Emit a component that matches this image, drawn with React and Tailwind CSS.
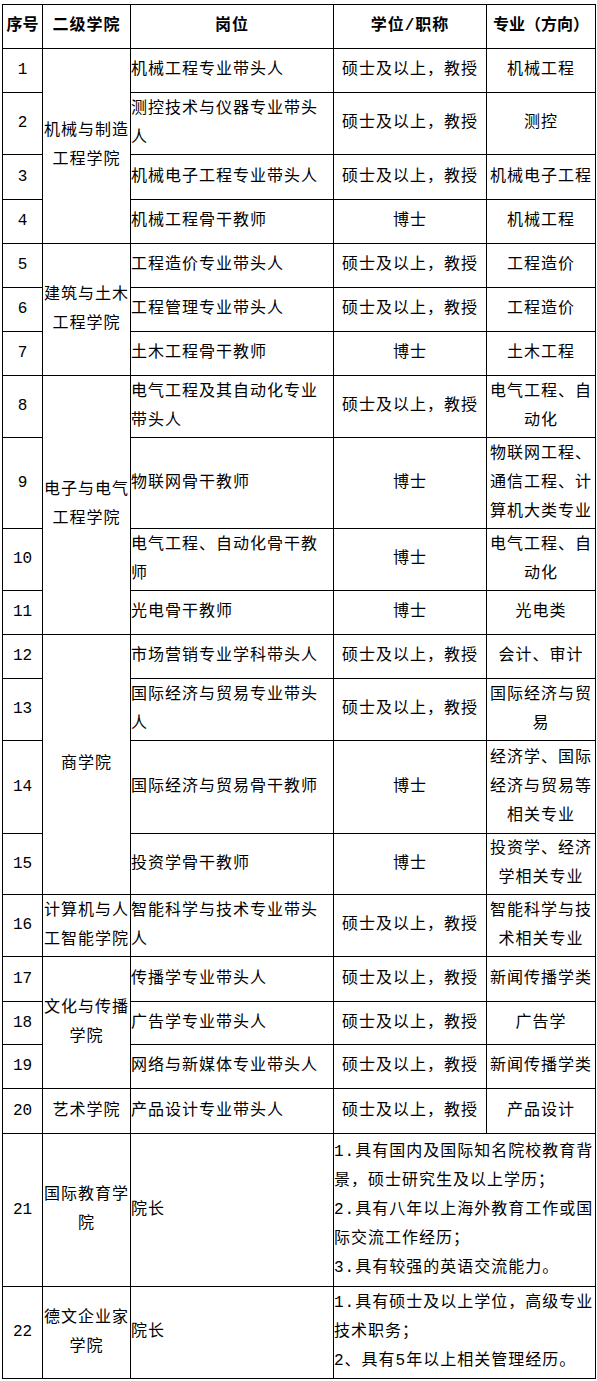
import React from 'react';

const rows = [
  { no: 1, college: '机械与制造工程学院', span: 4, post: '机械工程专业带头人', degree: '硕士及以上，教授', major: '机械工程', h: 'h-[44px]' },
  { no: 2, post: '测控技术与仪器专业带头人', degree: '硕士及以上，教授', major: '测控', h: 'h-[62px]' },
  { no: 3, post: '机械电子工程专业带头人', degree: '硕士及以上，教授', major: '机械电子工程', h: 'h-[45px]' },
  { no: 4, post: '机械工程骨干教师', degree: '博士', major: '机械工程', h: 'h-[44px]' },
  { no: 5, college: '建筑与土木工程学院', span: 3, post: '工程造价专业带头人', degree: '硕士及以上，教授', major: '工程造价', h: 'h-[44px]' },
  { no: 6, post: '工程管理专业带头人', degree: '硕士及以上，教授', major: '工程造价', h: 'h-[44px]' },
  { no: 7, post: '土木工程骨干教师', degree: '博士', major: '土木工程', h: 'h-[44px]' },
  { no: 8, college: '电子与电气工程学院', span: 4, post: '电气工程及其自动化专业带头人', degree: '硕士及以上，教授', major: '电气工程、自动化', h: 'h-[62px]' },
  { no: 9, post: '物联网骨干教师', degree: '博士', major: '物联网工程、通信工程、计算机大类专业', h: 'h-[91px]' },
  { no: 10, post: '电气工程、自动化骨干教师', degree: '博士', major: '电气工程、自动化', h: 'h-[62px]' },
  { no: 11, post: '光电骨干教师', degree: '博士', major: '光电类', h: 'h-[44px]' },
  { no: 12, college: '商学院', span: 4, post: '市场营销专业学科带头人', degree: '硕士及以上，教授', major: '会计、审计', h: 'h-[44px]' },
  { no: 13, post: '国际经济与贸易专业带头人', degree: '硕士及以上，教授', major: '国际经济与贸易', h: 'h-[62px]' },
  { no: 14, post: '国际经济与贸易骨干教师', degree: '博士', major: '经济学、国际经济与贸易等相关专业', h: 'h-[93px]' },
  { no: 15, post: '投资学骨干教师', degree: '博士', major: '投资学、经济学相关专业', h: 'h-[61px]' },
  { no: 16, college: '计算机与人工智能学院', span: 1, post: '智能科学与技术专业带头人', degree: '硕士及以上，教授', major: '智能科学与技术相关专业', h: 'h-[62px]' },
  { no: 17, college: '文化与传播学院', span: 3, post: '传播学专业带头人', degree: '硕士及以上，教授', major: '新闻传播学类', h: 'h-[45px]' },
  { no: 18, post: '广告学专业带头人', degree: '硕士及以上，教授', major: '广告学', h: 'h-[43px]' },
  { no: 19, post: '网络与新媒体专业带头人', degree: '硕士及以上，教授', major: '新闻传播学类', h: 'h-[44px]' },
  { no: 20, college: '艺术学院', span: 1, post: '产品设计专业带头人', degree: '硕士及以上，教授', major: '产品设计', h: 'h-[45px]' },
  {
    no: 21, college: '国际教育学院', span: 1, post: '院长', h: 'h-[153px]',
    notes: ['1.具有国内及国际知名院校教育背景，硕士研究生及以上学历；', '2.具有八年以上海外教育工作或国际交流工作经历；', '3.具有较强的英语交流能力。'],
  },
  {
    no: 22, college: '德文企业家学院', span: 1, post: '院长', h: 'h-[92px]',
    notes: ['1.具有硕士及以上学位，高级专业技术职务；', '2、具有5年以上相关管理经历。'],
  },
];

const cell = 'border border-black align-middle p-0';

export default function App() {
  return (
    <div
      className="bg-white pt-[4px] pl-[2px] text-black text-[16px] leading-[29px] tracking-[1px]"
      style={{ fontFamily: '"Liberation Mono", "Noto Sans CJK SC", monospace' }}
    >
      <table className="border-collapse table-fixed w-[593px]">
        <colgroup>
          <col className="w-[40px]" />
          <col className="w-[88px]" />
          <col className="w-[203px]" />
          <col className="w-[153px]" />
          <col className="w-[109px]" />
        </colgroup>
        <thead>
          <tr className="h-[44px] font-bold">
            <th className={`${cell} text-center tracking-normal`}>序号</th>
            <th className={`${cell} text-center`}>二级学院</th>
            <th className={`${cell} text-center`}>岗位</th>
            <th className={`${cell} text-center`}>学位/职称</th>
            <th className={`${cell} text-center tracking-normal`}>专业（方向）</th>
          </tr>
        </thead>
        <tbody>
          {rows.map((r) => (
            <tr key={r.no} className={r.h}>
              <td className={`${cell} text-center tracking-normal`}>{r.no}</td>
              {r.college && (
                <td rowSpan={r.span} className={`${cell} text-center`}>
                  {r.college}
                </td>
              )}
              <td className={`${cell} text-left`}>{r.post}</td>
              {r.notes ? (
                <td colSpan={2} className={`${cell} text-left`}>
                  {r.notes.map((n) => (
                    <div key={n}>{n}</div>
                  ))}
                </td>
              ) : (
                <>
                  <td className={`${cell} text-center`}>{r.degree}</td>
                  <td className={`${cell} text-center`}>{r.major}</td>
                </>
              )}
            </tr>
          ))}
        </tbody>
      </table>
    </div>
  );
}
